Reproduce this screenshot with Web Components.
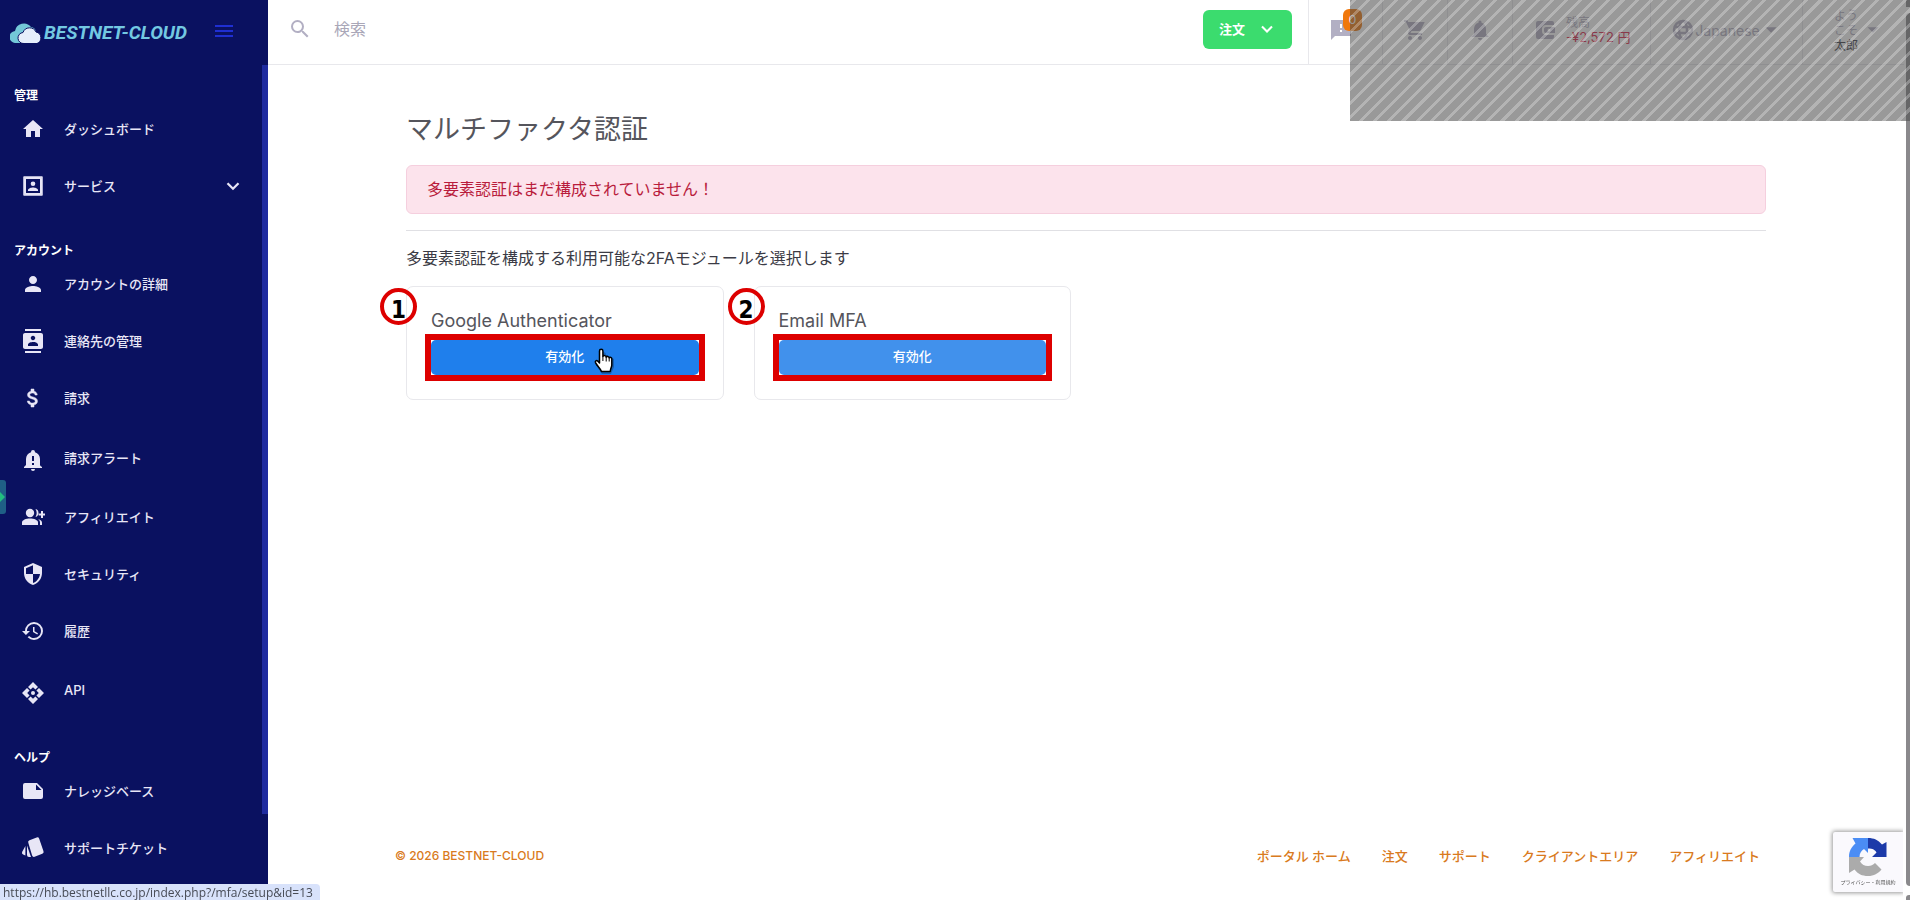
<!DOCTYPE html>
<html lang="ja">
<head>
<meta charset="utf-8">
<meta name="viewport" content="width=device-width, initial-scale=1">
<title>マルチファクタ認証</title>
<style>
  :root {
    --navy: #0a1160;
    --line: #e8e8ec;
    --muted: #b2afc3;
    --orange: #d97a20;
    --annotation: #dd0000;
    --font: Inter, 'Noto Sans CJK JP', sans-serif;
  }

  body {
    margin: 0;
    background: #fff;
    color: #3b3b45;
    font-family: var(--font);
    font-size: 16px;
  }
</style>
</head>
<body>
<portal-app></portal-app>

<script>
const ICONS = {
  home: '<path d="M10 20v-6h4v6h5v-8h3L12 3 2 12h3v8z"/>',
  service: '<path fill-rule="evenodd" d="M19 3H5a2 2 0 0 0-2 2v14a2 2 0 0 0 2 2h14a2 2 0 0 0 2-2V5a2 2 0 0 0-2-2zm0 16H5V5h14v14z"/><circle cx="12" cy="9.7" r="2.3"/><path d="M7 17v-1c0-1.700 3.300-2.600 5-2.600s5 .9 5 2.600v1z"/><path fill="none" stroke="currentColor" stroke-width="1.500" d="M3 3h18v18H3z" stroke-linejoin="round"/>',
  person: '<path d="M12 12c2.210 0 4-1.790 4-4s-1.790-4-4-4-4 1.790-4 4 1.790 4 4 4zm0 2c-2.670 0-8 1.340-8 4v2h16v-2c0-2.660-5.330-4-8-4z"/>',
  contacts: '<path fill-rule="evenodd" d="M20 0H4v2h16V0zM4 24h16v-2H4v2zM20 4H4c-1.100 0-2 .9-2 2v12c0 1.100.9 2 2 2h16c1.100 0 2-.9 2-2V6c0-1.100-.9-2-2-2zm-8 2.750c1.240 0 2.250 1.010 2.250 2.250s-1.010 2.250-2.250 2.250S9.750 10.240 9.750 9 10.760 6.750 12 6.750zM17 17H7v-1.500c0-1.670 3.330-2.500 5-2.500s5 .83 5 2.500V17z"/>',
  dollar: '<path d="M11.800 10.900c-2.270-.59-3-1.200-3-2.150 0-1.090 1.010-1.850 2.700-1.850 1.780 0 2.440.85 2.500 2.100h2.210c-.07-1.720-1.120-3.300-3.210-3.810V3h-3v2.160c-1.940.42-3.500 1.680-3.500 3.610 0 2.310 1.910 3.460 4.700 4.130 2.500.6 3 1.480 3 2.410 0 .69-.49 1.790-2.700 1.790-2.060 0-2.870-.92-2.980-2.100h-2.200c.12 2.190 1.760 3.420 3.680 3.830V21h3v-2.150c1.950-.37 3.500-1.500 3.500-3.550 0-2.840-2.430-3.810-4.700-4.400z" stroke="currentColor" stroke-width=".5"/>',
  bellAlert: '<path fill-rule="evenodd" d="M19.500 18 21 19v1H3v-1l2-2v-6c0-3.100 2-5.800 5-6.700V4a2 2 0 1 1 4 0v.3c3 .9 5 3.600 5 6.700v6zM13 8h-2v5h2zm0 7h-2v2h2zm-3 6h4a2 2 0 0 1-4 0z"/>',
  affiliate: '<circle cx="9" cy="8" r="4.200"/><path d="M1 20v-2.500C1 15 5 13.500 9 13.500s8 1.500 8 4V20z"/><path d="M14.500 4c2 .3 3 2 3 4s-1 3.600-3 4c.8-1.200 1.200-2.500 1.200-4s-.4-2.800-1.200-4zM17 14c2.600.8 4 2 4 3.800V20h-2v-2.500c0-1.400-.7-2.500-2-3.500zM20 6h2v2.500h2.500v2H22V13h-2v-2.500h-2.300v-2H20z"/>',
  shield: '<path d="M12 1 3 5v6c0 5.550 3.840 10.740 9 12 5.160-1.260 9-6.450 9-12V5l-9-4zm0 10.990h7c-.53 4.120-3.280 7.790-7 8.940V12H5V6.300l7-3.110v8.800z"/>',
  history: '<path d="M13 3a9 9 0 0 0-9 9H1l3.890 3.890.07.14L9 12H6c0-3.870 3.130-7 7-7s7 3.130 7 7-3.130 7-7 7c-1.930 0-3.680-.79-4.940-2.060l-1.420 1.420A8.954 8.954 0 0 0 13 21a9 9 0 0 0 0-18zm-1 5v5l4.280 2.540.72-1.210-3.500-2.080V8H12z"/>',
  api: '<circle cx="12" cy="12" r="2"/><path d="m12 1 5 5-2.600 2.600L12 6.200 9.600 8.600 7 6zM23 12l-5 5-2.600-2.600 2.400-2.400-2.400-2.400L18 7zM12 23l-5-5 2.600-2.600 2.400 2.400 2.400-2.400L17 18zM1 12l5-5 2.600 2.600L6.200 12l2.400 2.400L6 17z"/>',
  note: '<path fill-rule="evenodd" d="M4 4h12l6 6v8a2 2 0 0 1-2 2H4a2 2 0 0 1-2-2V6a2 2 0 0 1 2-2zm11 1.500V11h5.500z"/>',
  tickets: '<path d="m8.500 4.200 7.200-2.700a2 2 0 0 1 2.500 1.200l4.300 12.600a2 2 0 0 1-1.200 2.500l-7.700 3a2 2 0 0 1-2.500-1.200L7.300 6.800a2 2 0 0 1 1.200-2.600zM6 9.500 10 21H8a2 2 0 0 1-2-2zM4.400 10v9.500l-2.300-1a2 2 0 0 1-1-2.500z"/>',
  chevron: '<path fill="none" stroke="currentColor" stroke-width="2.500" d="m6 9 6 6 6-6"/>',
  search: '<path d="M15.500 14h-.79l-.28-.27A6.471 6.471 0 0 0 16 9.500 6.500 6.500 0 1 0 9.500 16c1.610 0 3.090-.59 4.230-1.570l.27.28v.79l5 4.990L20.490 19l-4.990-5zm-6 0C7.010 14 5 11.990 5 9.500S7.010 5 9.500 5 14 7.010 14 9.500 11.990 14 9.500 14z"/>',
  menu: '<path d="M3 4h18v2H3zm0 5h18v2H3zm0 5h18v2H3z"/>',
  feedback: '<path fill-rule="evenodd" d="M22 2H2v20l4-4h16zm-9 12h-2v-2h2zm0-4h-2V6h2z"/>',
  cart: '<path d="M7 18c-1.100 0-1.990.9-1.990 2S5.900 22 7 22s2-.9 2-2-.9-2-2-2zM1 2v2h2l3.600 7.590-1.350 2.450C4.520 15.370 5.480 17 7 17h12v-2H7.420l1.130-2h7.450c.75 0 1.410-.41 1.750-1.030L21.700 4H5.210l-.94-2zm16 16c-1.100 0-1.990.9-1.990 2s.89 2 1.990 2 2-.9 2-2-.9-2-2-2z"/>',
  bell: '<path d="M12 22c1.100 0 2-.9 2-2h-4a2 2 0 0 0 2 2zm6-6v-5c0-3.070-1.640-5.640-4.500-6.320V4a1.500 1.500 0 0 0-3 0v.68C7.630 5.360 6 7.920 6 11v5l-3 3h18z"/>',
  wallet: '<path fill-rule="evenodd" d="M5 3h14a2 2 0 0 1 2 2v2h-8a4 4 0 0 0-4 4v2a4 4 0 0 0 4 4h8v2a2 2 0 0 1-2 2H5a2 2 0 0 1-2-2V5a2 2 0 0 1 2-2zm8 6h9v6h-9a2 2 0 0 1-2-2v-2c0-1.100.9-2 2-2zm3 4.500a1.500 1.500 0 1 0 0-3 1.500 1.500 0 0 0 0 3z"/>',
  globe: '<g fill="none" stroke="currentColor" stroke-width="2.500"><circle cx="12" cy="12" r="9"/><ellipse cx="12" cy="12" rx="4" ry="9"/><path d="M4 9h16M4 15h16"/></g>',
  caret: '<path d="m6 9 6 6 6-6z"/>',
};

class PortalIcon extends HTMLElement {
  constructor() {
    super();
    this.attachShadow({ mode: 'open' });
  }

  connectedCallback() {
    const size = this.getAttribute('size') || '24';
    this.shadowRoot.innerHTML = `
      <style>
        :host { display: block; flex: none; }
        svg { display: block; fill: currentColor; }
      </style>
      <svg width="${size}" height="${size}" viewBox="0 0 24 24" aria-hidden="true">${ICONS[this.getAttribute('name')]}</svg>
    `;
  }
}
customElements.define('portal-icon', PortalIcon);

class PortalLogo extends HTMLElement {
  constructor() {
    super();
    this.attachShadow({ mode: 'open' });
    this.shadowRoot.innerHTML = `
      <style>
        :host { display: block; }
        a {
          display: flex;
          align-items: center;
          gap: 1px;
          color: #73c8e2;
          font: italic bold 19px/24px Roboto, sans-serif;
          text-decoration: none;
        }
      </style>
      <a href="#">
        <svg width="33" height="20" viewBox="0 0 33 20" aria-hidden="true">
          <path fill="#73c8d8" d="M6 20a6 6 0 0 1-1-12A9 9 0 0 1 21 4a6 6 0 0 1 5 5v11z"/>
          <path fill="#e6effb" stroke="#0a1160" d="M14 20.500a5.500 5.500 0 0 1-1-11 7 7 0 0 1 13-.5 6 6 0 0 1 1 11.500z"/>
        </svg>
        <span>BESTNET-CLOUD</span>
      </a>
    `;
  }
}
customElements.define('portal-logo', PortalLogo);

class NavItem extends HTMLElement {
  constructor() {
    super();
    this.attachShadow({ mode: 'open' });
  }

  connectedCallback() {
    this.shadowRoot.innerHTML = `
      <style>
        :host { display: block; }
        :host([lowered]) { padding-top: 5px; }
        a {
          display: flex;
          align-items: center;
          height: 36px;
          padding: 0 18px 0 21px;
          color: #e8e6f6;
          font-size: 13px;
          font-weight: 500;
          text-decoration: none;
        }
        span { flex: 1; margin-left: 19px; padding-bottom: 2px; }
        :host([lowered]) span { padding-bottom: 6px; }
      </style>
      <a href="#">
        <portal-icon name="${this.getAttribute('icon')}"></portal-icon>
        <span><slot></slot></span>
        ${this.hasAttribute('expandable') ? '<portal-icon name="chevron" size="22"></portal-icon>' : ''}
      </a>
    `;
  }
}
customElements.define('nav-item', NavItem);

class NavSection extends HTMLElement {
  constructor() {
    super();
    this.attachShadow({ mode: 'open' });
  }

  connectedCallback() {
    this.shadowRoot.innerHTML = `
      <style>
        :host { display: block; }
        h2 {
          margin: 0 0 5px 14px;
          color: #fff;
          font-size: 12px;
          line-height: 20px;
          font-weight: bold;
        }
        .items { display: flex; flex-direction: column; gap: 21px; }
      </style>
      <h2>${this.getAttribute('heading')}</h2>
      <div class="items"><slot></slot></div>
    `;
  }
}
customElements.define('nav-section', NavSection);

class PortalSidebar extends HTMLElement {
  constructor() {
    super();
    this.attachShadow({ mode: 'open' });
    this.shadowRoot.innerHTML = `
      <style>
        :host { display: block; background: var(--navy); }
        header {
          display: flex;
          align-items: center;
          gap: 25px;
          height: 65px;
          padding-left: 10px;
        }
        header button {
          padding: 0;
          border: 0;
          background: none;
          color: #1f2fd2;
          cursor: pointer;
        }
        .scroller { display: flex; }
        nav {
          flex: 1;
          display: flex;
          flex-direction: column;
          gap: 37px;
          padding: 21px 0;
        }
        .thumb { width: 6px; height: 749px; background: #1f2b9f; }
      </style>
      <header>
        <portal-logo></portal-logo>
        <button aria-label="メニュー"><portal-icon name="menu" size="24"></portal-icon></button>
      </header>
      <div class="scroller">
        <nav>
          <nav-section heading="管理">
            <nav-item icon="home">ダッシュボード</nav-item>
            <nav-item icon="service" expandable>サービス</nav-item>
          </nav-section>
          <nav-section heading="アカウント">
            <nav-item icon="person">アカウントの詳細</nav-item>
            <nav-item icon="contacts">連絡先の管理</nav-item>
            <nav-item icon="dollar">請求</nav-item>
            <nav-item icon="bellAlert" lowered>請求アラート</nav-item>
            <nav-item icon="affiliate">アフィリエイト</nav-item>
            <nav-item icon="shield">セキュリティ</nav-item>
            <nav-item icon="history">履歴</nav-item>
            <nav-item icon="api" lowered>API</nav-item>
          </nav-section>
          <nav-section heading="ヘルプ">
            <nav-item icon="note">ナレッジベース</nav-item>
            <nav-item icon="tickets">サポートチケット</nav-item>
          </nav-section>
        </nav>
        <div class="thumb"></div>
      </div>
    `;
  }
}
customElements.define('portal-sidebar', PortalSidebar);

class PortalTopbar extends HTMLElement {
  constructor() {
    super();
    this.attachShadow({ mode: 'open' });
    this.shadowRoot.innerHTML = `
      <style>
        :host {
          display: flex;
          height: 64px;
          border-bottom: 1px solid var(--line);
          color: var(--muted);
        }
        button {
          display: flex;
          align-items: center;
          padding: 0;
          border: 0;
          background: none;
          color: inherit;
          font: inherit;
          cursor: pointer;
        }
        .search {
          flex: 1;
          display: flex;
          align-items: center;
          gap: 22px;
          height: 58px;
          padding-left: 20px;
        }
        input {
          flex: 1;
          min-width: 0;
          padding: 0;
          border: 0;
          outline: none;
          background: none;
          font: 16px/24px var(--font);
        }
        input::placeholder { color: #aaa7b8; opacity: 1; }
        .order {
          gap: 12px;
          height: 39px;
          margin: 10px 16px 0 0;
          padding: 0 15px 2px 16px;
          border-radius: 6px;
          background: #3bdc6e;
          color: #fff;
          font-size: 13px;
          font-weight: bold;
        }
        .cell {
          box-sizing: border-box;
          height: 64px;
          border-left: 1px solid var(--line);
          padding-bottom: 4px;
          justify-content: center;
        }
        .icon { width: 65px; }
        .chat { width: 74px; position: relative; justify-content: flex-start; padding-left: 20px; }
        .badge {
          position: absolute;
          left: 34px;
          top: 9px;
          width: 19px;
          border-radius: 6px;
          background: #f0780c;
          color: #fff;
          font-size: 12px;
          line-height: 22px;
        }
        .balance {
          width: 138px;
          justify-content: flex-start;
          gap: 9px;
          padding-left: 20px;
          font-size: 12px;
          line-height: 15px;
          text-align: left;
        }
        .amount { display: block; color: #dc2348; font-size: 13px; }
        .lang { width: 152px; font-size: 14px; }
        .user {
          width: 102px;
          justify-content: flex-start;
          gap: 4px;
          padding-left: 31px;
          font-size: 12px;
          line-height: 15px;
        }
        .user > span { width: 24px; text-align: left; }
        .user strong { color: #3b3b45; font-weight: normal; }
      </style>
      <label class="search">
        <portal-icon name="search"></portal-icon>
        <input type="search" placeholder="検索" aria-label="検索">
      </label>
      <button class="order">注文 <portal-icon name="chevron" size="20"></portal-icon></button>
      <button class="cell chat" aria-label="通知"><portal-icon name="feedback"></portal-icon><span class="badge">0</span></button>
      <button class="cell icon" aria-label="カート"><portal-icon name="cart"></portal-icon></button>
      <button class="cell icon" aria-label="お知らせ"><portal-icon name="bell"></portal-icon></button>
      <button class="cell balance">
        <portal-icon name="wallet"></portal-icon>
        <span>残高<span class="amount">-¥2,572 円</span></span>
      </button>
      <button class="cell lang"><portal-icon name="globe"></portal-icon>Japanese<portal-icon name="caret" size="22"></portal-icon></button>
      <button class="cell user"><span>ようこそ<strong>太郎</strong></span><portal-icon name="caret" size="22"></portal-icon></button>
    `;
  }
}
customElements.define('portal-topbar', PortalTopbar);

class MfaCard extends HTMLElement {
  constructor() {
    super();
    this.attachShadow({ mode: 'open' });
  }

  connectedCallback() {
    const hovered = this.hasAttribute('hovered');
    this.shadowRoot.innerHTML = `
      <style>
        :host {
          display: block;
          position: relative;
          padding: 21px 18px 18px;
          border: 1px solid var(--line);
          border-radius: 7px;
        }
        h3 {
          margin: 0 0 0 6px;
          color: #55555c;
          font: 18px/26px Inter, sans-serif;
        }
        .frame { position: relative; border: 6px solid var(--annotation); }
        button {
          display: block;
          width: 100%;
          height: 35px;
          padding: 0 0 4px;
          border: 0;
          border-radius: 5px;
          background: #4191ec;
          color: #fff;
          font: 500 13px/20px var(--font);
          cursor: pointer;
        }
        :host([hovered]) button { background: #1f7fec; }
        .step {
          position: absolute;
          left: -27px;
          top: 1px;
          box-sizing: border-box;
          width: 37px;
          height: 37px;
          padding-top: 4px;
          border: 4px solid var(--annotation);
          border-radius: 50%;
          color: #000;
          font: bold 24px/29px 'DejaVu Sans Condensed', 'DejaVu Sans', sans-serif;
          text-align: center;
        }
        .pointer { position: absolute; left: 163px; top: 8px; }
      </style>
      <h3>${this.getAttribute('name')}</h3>
      <div class="frame">
        <button>有効化</button>
        ${hovered ? `
          <svg class="pointer" width="22" height="28" viewBox="0 0 22 28" aria-hidden="true">
            <path fill="#000" opacity=".25" d="M9 4c2 0 3 1 3 3l8 4v8l-3 7H8l-6-9z"/>
            <path fill="#fff" stroke="#000" stroke-width="1.500" stroke-linejoin="round" d="M5.500 15V3a1.700 1.700 0 0 1 3.400 0v5.500c.5-1.300 3-1.200 3.300.5.700-1 2.600-.8 3 .8.900-.9 2.600-.4 2.600 1.200v6c0 2-1.300 3-1.600 6.500H7.500C7 21 3 18 1.500 14.600c-.6-1.600 1-2.600 2.200-1.500z"/>
            <path stroke="#000" d="M12.200 9v4.500M15.200 10v3.500M8.900 8.500v4.500"/>
          </svg>` : ''}
      </div>
      <span class="step">${this.getAttribute('step')}</span>
    `;
  }
}
customElements.define('mfa-card', MfaCard);

class MfaPage extends HTMLElement {
  constructor() {
    super();
    this.attachShadow({ mode: 'open' });
    this.shadowRoot.innerHTML = `
      <style>
        :host {
          display: block;
          box-sizing: border-box;
          width: 100%;
          max-width: 1360px;
          margin: 0 auto;
          padding: 47px 0;
        }
        h1 {
          margin: 0 0 17px;
          color: #55555c;
          font-size: 27px;
          line-height: 36px;
          font-weight: normal;
        }
        .alert {
          padding: 11px 20px 12px;
          border: 1px solid #f5cfde;
          border-radius: 6px;
          background: #fce3ec;
          color: #b91c3c;
          line-height: 24px;
        }
        hr {
          margin: 16px 0 15px;
          border: 0;
          border-top: 1px solid #e0e0e4;
        }
        p { margin: 0 0 16px; line-height: 24px; }
        .modules {
          display: grid;
          grid-template-columns: repeat(4, 1fr);
          gap: 30px;
        }
      </style>
      <h1>マルチファクタ認証</h1>
      <div class="alert" role="alert">多要素認証はまだ構成されていません！</div>
      <hr>
      <p>多要素認証を構成する利用可能な2FAモジュールを選択します</p>
      <div class="modules">
        <mfa-card name="Google Authenticator" step="1" hovered></mfa-card>
        <mfa-card name="Email MFA" step="2"></mfa-card>
      </div>
    `;
  }
}
customElements.define('mfa-page', MfaPage);

class PortalFooter extends HTMLElement {
  constructor() {
    super();
    this.attachShadow({ mode: 'open' });
    this.shadowRoot.innerHTML = `
      <style>
        :host {
          display: flex;
          justify-content: space-between;
          padding: 0 144px 34px 127px;
          color: var(--orange);
          font-size: 13px;
          line-height: 20px;
          font-weight: 500;
        }
        .copyright { font-size: 12px; }
        nav { display: flex; gap: 31px; }
        a { color: inherit; text-decoration: none; }
      </style>
      <span class="copyright">© 2026 BESTNET-CLOUD</span>
      <nav>
        <a href="#">ポータル ホーム</a>
        <a href="#">注文</a>
        <a href="#">サポート</a>
        <a href="#">クライアントエリア</a>
        <a href="#">アフィリエイト</a>
      </nav>
    `;
  }
}
customElements.define('portal-footer', PortalFooter);

class RecaptchaBadge extends HTMLElement {
  constructor() {
    super();
    this.attachShadow({ mode: 'open' });
    this.shadowRoot.innerHTML = `
      <style>
        :host {
          display: flex;
          flex-direction: column;
          align-items: center;
          box-sizing: border-box;
          width: 70px;
          height: 60px;
          padding-top: 6px;
          border-radius: 2px 0 0 2px;
          background: #faf9fd;
          box-shadow: 0 0 4px 1px #999;
          clip-path: inset(-6px 0 -6px -6px);
          color: #555;
          font-size: 5px;
          line-height: 12px;
          white-space: nowrap;
        }
      </style>
      <svg width="38" height="38" viewBox="0 0 38 38" aria-hidden="true">
        <path fill="#1c3aa9" d="M19 0c6 0 10 2 14 6.500L37.500 4v15H23l4.500-4.500C26 12 24 10.500 19 10.500z"/>
        <path fill="#4b8df5" d="M19 0v15l-4-4c-3 2-4.500 4.500-4.500 8H0C0 13 2.500 9 6.500 5.500L3.500 0z"/>
        <path fill="#ababab" d="M0 19h15l-4 4.500c2 3 4.500 4.500 8 4.500 3 0 5-1 7-3l6.500 6.500C29 35.500 25 38 19 38s-10-2-13.500-6.500L0 35z"/>
      </svg>
      <span>プライバシー - 利用規約</span>
    `;
  }
}
customElements.define('recaptcha-badge', RecaptchaBadge);

class PortalApp extends HTMLElement {
  constructor() {
    super();
    this.attachShadow({ mode: 'open' });
    this.shadowRoot.innerHTML = `
      <style>
        :host { display: flex; height: 100vh; overflow: hidden; }
        portal-sidebar { flex: none; width: 268px; }
        main { flex: 1; display: flex; flex-direction: column; min-width: 0; }
        portal-footer { margin-top: auto; }
        .scrollbar {
          flex: none;
          display: flex;
          flex-direction: column;
          justify-content: space-between;
          width: 4px;
          padding-left: 2px;
          overflow: hidden;
        }
        .scrollbar div { flex: 1; margin: 6px 0 9px; border-radius: 4px 0 0 4px; background: #8a898c; }
        .scrollbar i { height: 7px; background: #8a898c; }
        .scrollbar i:last-child { height: 5px; border-radius: 3px 0 0 0; }

        .mask, .link-hint, .side-tab, recaptcha-badge { position: fixed; }
        .mask {
          top: 0;
          right: 0;
          width: 560px;
          height: 121px;
          background:
            repeating-linear-gradient(-45deg, transparent 0 7px, rgba(255, 255, 255, .27) 7px 10px),
            rgba(76, 76, 76, .57);
          pointer-events: none;
        }
        .link-hint {
          left: 0;
          bottom: 0;
          padding: 2px 7px 0 3px;
          border-radius: 0 4px 0 0;
          background: #d8e2fb;
          color: #474b55;
          font: 12px/14px 'Open Sans', sans-serif;
        }
        .side-tab {
          left: 0;
          top: 480px;
          display: flex;
          align-items: center;
          width: 6px;
          height: 34px;
          border-radius: 0 3px 3px 0;
          background: #1f5f86;
        }
        recaptcha-badge { right: 7px; bottom: 8px; }
      </style>
      <portal-sidebar></portal-sidebar>
      <main>
        <portal-topbar></portal-topbar>
        <mfa-page></mfa-page>
        <portal-footer></portal-footer>
      </main>
      <div class="scrollbar"><i></i><div></div><i></i></div>
      <div class="side-tab">
        <svg width="5" height="10" viewBox="0 0 5 10" aria-hidden="true"><path fill="#22bd80" d="m0 0 5 5-5 5z"/></svg>
      </div>
      <recaptcha-badge></recaptcha-badge>
      <div class="mask"></div>
      <div class="link-hint">https://hb.bestnetllc.co.jp/index.php?/mfa/setup&amp;id=13</div>
    `;
  }
}
customElements.define('portal-app', PortalApp);
</script>
</body>
</html>
